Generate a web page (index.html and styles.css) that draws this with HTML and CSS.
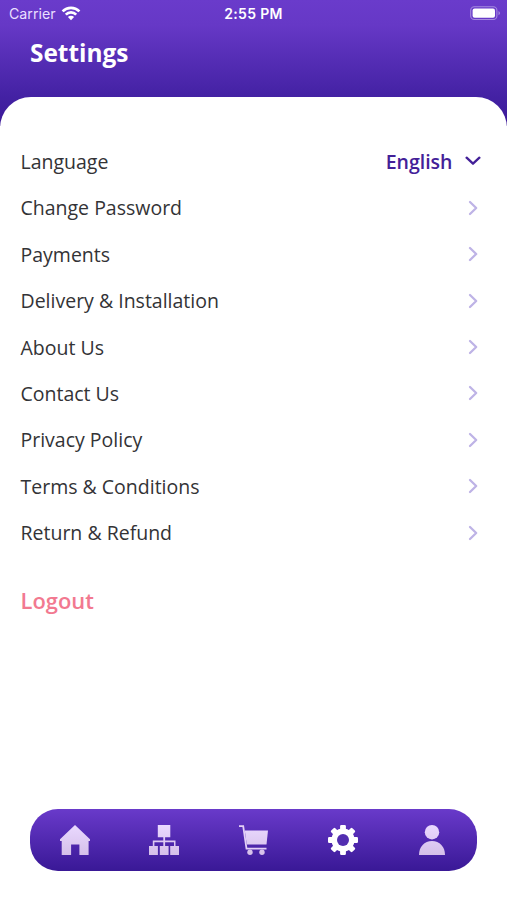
FILE: index.html
```html
<!DOCTYPE html>
<html lang="en">
<head>
<meta charset="utf-8">
<title>Settings</title>
<link rel="stylesheet" href="styles.css">
</head>
<body>
<div class="app">
  <header class="header">
    <div class="status">
      <div class="carrier"><span>Carrier</span>
        <svg width="20" height="15" viewBox="0 0 20 15" fill="none" stroke="#fff" stroke-width="2.7"><path d="M1.6 5.4C6.3.7 13.7.7 18.4 5.4M4.8 8.6c2.9-2.9 7.5-2.9 10.4 0"/><path d="M10 14.2 6.9 11.1a4.4 4.4 0 0 1 6.2 0Z" fill="#fff" stroke="none"/></svg>
      </div>
      <div class="time">2:55 PM</div>
      <svg class="battery" width="31" height="15" viewBox="0 0 31 15"><rect x=".7" y=".8" width="26.2" height="12.7" rx="3.6" fill="none" stroke="#a58adf" stroke-width="1.1"/><rect x="2.6" y="2.6" width="22.4" height="9.1" rx="2" fill="#fff"/><path d="M28.5 5v4.3c2-.9 2-3.4 0-4.3Z" fill="#a58adf"/></svg>
    </div>
    <h1 class="title">Settings</h1>
  </header>
  <main class="panel">
    <ul class="menu">
      <li><span>Language</span><span class="lang">English<svg width="16" height="10" viewBox="0 0 16 10"><path d="m1.6 1.7 6.4 6 6.4-6"/></svg></span></li>
      <li><span>Change Password</span><svg class="chev" width="10" height="16" viewBox="0 0 10 16"><path d="m2 2 6.2 6L2 14"/></svg></li>
      <li><span>Payments</span><svg class="chev" width="10" height="16" viewBox="0 0 10 16"><path d="m2 2 6.2 6L2 14"/></svg></li>
      <li><span>Delivery &amp; Installation</span><svg class="chev" width="10" height="16" viewBox="0 0 10 16"><path d="m2 2 6.2 6L2 14"/></svg></li>
      <li><span>About Us</span><svg class="chev" width="10" height="16" viewBox="0 0 10 16"><path d="m2 2 6.2 6L2 14"/></svg></li>
      <li><span>Contact Us</span><svg class="chev" width="10" height="16" viewBox="0 0 10 16"><path d="m2 2 6.2 6L2 14"/></svg></li>
      <li><span>Privacy Policy</span><svg class="chev" width="10" height="16" viewBox="0 0 10 16"><path d="m2 2 6.2 6L2 14"/></svg></li>
      <li><span>Terms &amp; Conditions</span><svg class="chev" width="10" height="16" viewBox="0 0 10 16"><path d="m2 2 6.2 6L2 14"/></svg></li>
      <li><span>Return &amp; Refund</span><svg class="chev" width="10" height="16" viewBox="0 0 10 16"><path d="m2 2 6.2 6L2 14"/></svg></li>
    </ul>
    <div class="logout">Logout</div>
  </main>
  <nav class="tabs">
    <svg viewBox="0 0 30 30"><defs><linearGradient id="g" gradientUnits="userSpaceOnUse" x1="0" y1="0" x2="0" y2="30"><stop stop-color="#ead9ff"/><stop offset="1" stop-color="#d5bfe9"/></linearGradient></defs><path d="M15 0 30 14.2V16h-1.4v14h-9.2V19.4h-8.3V30H1.7V16H0v-1.8Z" fill="url(#g)"/></svg>
    <svg viewBox="0 0 30 30"><path d="M8.8 0h12.5v12.2h-5.2v3.4h10.4V21H30v9h-8.8v-9H25v-3.8h-8.9V21h3.5v9h-8.8v-9h3.5v-3.8H5.4V21h3.5v9H0v-9h3.8v-5.4h10.5v-3.4H8.8Z" fill="url(#g)"/></svg>
    <svg viewBox="-1 0 30 30"><path d="M5.8 5.6H29l-1.5 14H7.8Z" fill="url(#g)"/><path d="M0 1.2h4.2l3.3 22.5h20" fill="none" stroke="#e3cff6" stroke-width="1.8"/><circle cx="11" cy="27.3" r="2.7" fill="url(#g)"/><circle cx="23" cy="27.3" r="2.7" fill="url(#g)"/></svg>
    <svg viewBox="0 0 30 30"><g fill="#fff"><g id="teeth"><rect x="12.1" width="5.8" height="30" rx="1.2"/><rect y="12.1" width="30" height="5.8" rx="1.2"/></g><use href="#teeth" transform="rotate(45 15 15)"/><circle cx="15" cy="15" r="11.6"/></g><circle cx="15" cy="15" r="6" fill="#522eb0"/></svg>
    <svg viewBox="0 0 30 30"><circle cx="15" cy="7.2" r="7.2" fill="url(#g)"/><path d="M2 30C2 21.7 7.3 16 15 16s13 5.7 13 14Z" fill="url(#g)"/></svg>
  </nav>
</div>
</body>
</html>
```
FILE: styles.css
```css
* { box-sizing: border-box; }
body { margin: 0; font-family: "Open Sans", sans-serif; background: #fff; }
.app { width: 507px; height: 900px; display: flex; flex-direction: column; overflow: hidden; background: linear-gradient(#6a3bcb, #6638c6 25px, #4422a4 95px, #3b1998 126px, #fff 126px); }
.header { height: 97.4px; flex: none; }
.status { height: 27px; display: grid; grid-template-columns: 1fr auto 1fr; align-items: center; padding: 0 6px 0 9px; font-family: Inter, sans-serif; color: #fff; font-size: 14.2px; }
.carrier { display: flex; align-items: center; gap: 5px; color: #eadfff; }
.carrier svg { margin-top: -1px; }
.time { font-weight: 600; font-size: 14px; letter-spacing: .35px; margin-left: -3px; }
.battery { justify-self: end; }
.title { margin: 9px 0 0 30px; font-size: 24.4px; line-height: 34px; font-weight: 700; color: #fff; }
.panel { flex: 1; background: #fff; border-radius: 31px 31px 0 0; padding: 40.9px 26px 0 20.5px; }
.menu { list-style: none; margin: 0; padding: 0; }
.menu li { height: 46.4px; display: flex; align-items: center; justify-content: space-between; font-size: 19.5px; color: #333336; }
.menu svg { fill: none; stroke: #432098; stroke-width: 2.3; stroke-linecap: round; stroke-linejoin: round; }
.menu .chev { stroke: #beb3e6; margin-right: 3px; }
.lang { display: flex; align-items: center; gap: 12.5px; color: #432098; font-weight: 600; }
.logout { margin-top: 28px; font-size: 21.9px; line-height: 34px; font-weight: 600; color: #f27990; }
.tabs { height: 62px; flex: none; width: 447px; margin: 0 auto 29.5px; border-radius: 28px; background: linear-gradient(#693aca, #391896); display: grid; grid-template-columns: repeat(5, 1fr); align-items: center; justify-items: center; }
.tabs svg { width: 30px; height: 30px; }
```
